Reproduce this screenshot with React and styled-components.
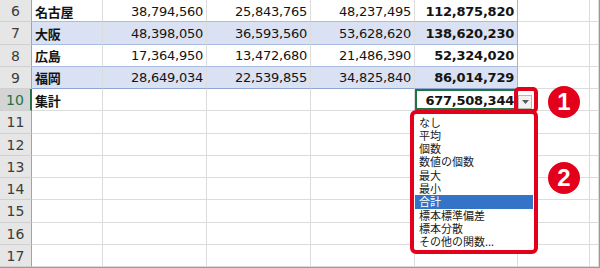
import React from "react";
import styled, { createGlobalStyle } from "styled-components";

const GlobalStyle = createGlobalStyle`
  html, body { margin: 0; padding: 0; background: #fff; overflow: hidden; }
  * { box-sizing: border-box; }
`;

const COLS = "32px 71px 104px 104px 104px 103px 72px 9px";
const GREEN = "#217346";
const RED = "#e2001a";

const data = [
  { n: 6, name: "名古屋", v: ["38,794,560", "25,843,765", "48,237,495"], total: "112,875,820" },
  { n: 7, name: "大阪", v: ["48,398,050", "36,593,560", "53,628,620"], total: "138,620,230" },
  { n: 8, name: "広島", v: ["17,364,950", "13,472,680", "21,486,390"], total: "52,324,020" },
  { n: 9, name: "福岡", v: ["28,649,034", "22,539,855", "34,825,840"], total: "86,014,729" },
];

const menu = [
  "なし",
  "平均",
  "個数",
  "数値の個数",
  "最大",
  "最小",
  "合計",
  "標本標準偏差",
  "標本分散",
  "その他の関数...",
];

function App() {
  const empty = [11, 12, 13, 14, 15, 16, 17];

  return (
    <>
      <GlobalStyle />
      <Sheet>
        {data.map((r, i) => (
          <Row key={r.n}>
            <RowHead>{r.n}</RowHead>
            <Cell $table $band={i % 2 === 1} $last={i === data.length - 1} $bold>
              {r.name}
            </Cell>
            {r.v.map((val, j) => (
              <Cell key={j} $table $band={i % 2 === 1} $last={i === data.length - 1} $right>
                {val}
              </Cell>
            ))}
            <Cell $table $edge $band={i % 2 === 1} $last={i === data.length - 1} $right $bold>
              {r.total}
            </Cell>
            <Cell />
            <Cell />
          </Row>
        ))}

        <Row>
          <RowHead $active>10</RowHead>
          <Cell $bold>集計</Cell>
          <Cell />
          <Cell />
          <Cell />
          <Cell $right $bold $selected>
            677,508,344
          </Cell>
          <Cell />
          <Cell />
        </Row>

        {empty.map((n) => (
          <Row key={n}>
            <RowHead>{n}</RowHead>
            <Cell />
            <Cell />
            <Cell />
            <Cell />
            <Cell />
            <Cell />
            <Cell />
          </Row>
        ))}

        <DropButton>
          <svg width="7" height="4" viewBox="0 0 7 4">
            <path d="M0 0 H7 L3.5 4 Z" fill="#5a5a5a" />
          </svg>
        </DropButton>
        <ButtonFrame />

        <FuncList>
          {menu.map((m) => (
            <FuncItem key={m} $active={m === "合計"}>
              {m}
            </FuncItem>
          ))}
        </FuncList>

        <Badge $top={86}>1</Badge>
        <Badge $top={162}>2</Badge>
      </Sheet>
    </>
  );
}

const Sheet = styled.div`
  position: relative;
  width: 600px;
  height: 268px;
  display: flex;
  flex-direction: column;
  border-right: 1px solid #9a9a9a;
  border-bottom: 1px solid #9a9a9a;
  font-family: "DejaVu Sans", "Noto Sans CJK JP", sans-serif;
  color: #141414;
`;

const Row = styled.div`
  flex: 1;
  display: grid;
  grid-template-columns: ${COLS};
  min-height: 0;
`;

const RowHead = styled.div`
  display: flex;
  align-items: center;
  justify-content: center;
  background: ${(p) => (p.$active ? "#d4d4d4" : "#e6e6e6")};
  color: ${(p) => (p.$active ? GREEN : "#3c3c3c")};
  border-bottom: 1px solid #d0d0d0;
  border-right: ${(p) => (p.$active ? `2px solid ${GREEN}` : "1px solid #a3a3a3")};
  font-size: 14px;
  padding-top: 1px;
`;

const Cell = styled.div`
  position: relative;
  display: flex;
  align-items: center;
  justify-content: ${(p) => (p.$right ? "flex-end" : "flex-start")};
  padding: 1px 3px 0 3px;
  font-size: 13px;
  letter-spacing: -0.25px;
  font-weight: ${(p) => (p.$bold ? 700 : 400)};
  white-space: nowrap;
  background: ${(p) => (p.$band ? "#d9e1f2" : "#fff")};
  border-right: 1px solid ${(p) => (p.$edge ? "#9fb3dc" : "#dcdcdc")};
  border-bottom: 1px solid
    ${(p) => (p.$last ? "#8ea6d4" : p.$table ? "#a9bce2" : "#dcdcdc")};
  box-shadow: ${(p) => (p.$selected ? `inset 0 0 0 2px ${GREEN}` : "none")};
`;

const DropButton = styled.div`
  position: absolute;
  left: 518px;
  top: 95px;
  width: 14px;
  height: 14px;
  display: flex;
  align-items: center;
  justify-content: center;
  background: #f2f2f2;
  border: 1px solid #b8b8b8;
  z-index: 2;
`;

const ButtonFrame = styled.div`
  position: absolute;
  left: 514px;
  top: 87px;
  width: 24px;
  height: 26px;
  border: 4px solid ${RED};
  border-radius: 5px;
  z-index: 3;
`;

const FuncList = styled.div`
  position: absolute;
  left: 410px;
  top: 110px;
  width: 128px;
  height: 144px;
  padding: 1.5px 1px 1px;
  background: #fff;
  border: 4px solid ${RED};
  border-radius: 6px;
  z-index: 3;
  display: flex;
  flex-direction: column;
`;

const FuncItem = styled.div`
  height: 13.3px;
  line-height: 13.3px;
  padding-left: 4px;
  font-size: 11px;
  font-family: "Noto Sans CJK JP", sans-serif;
  white-space: nowrap;
  background: ${(p) => (p.$active ? "#3474c6" : "transparent")};
  color: ${(p) => (p.$active ? "#fff" : "#1a1a1a")};
`;

const Badge = styled.div`
  position: absolute;
  left: 548px;
  top: ${(p) => p.$top}px;
  width: 32px;
  height: 32px;
  border-radius: 50%;
  background: ${RED};
  color: #fff;
  display: flex;
  align-items: center;
  justify-content: center;
  font-family: "Liberation Sans", Arial, sans-serif;
  font-weight: 700;
  font-size: 24px;
  z-index: 3;
`;

export default App;
